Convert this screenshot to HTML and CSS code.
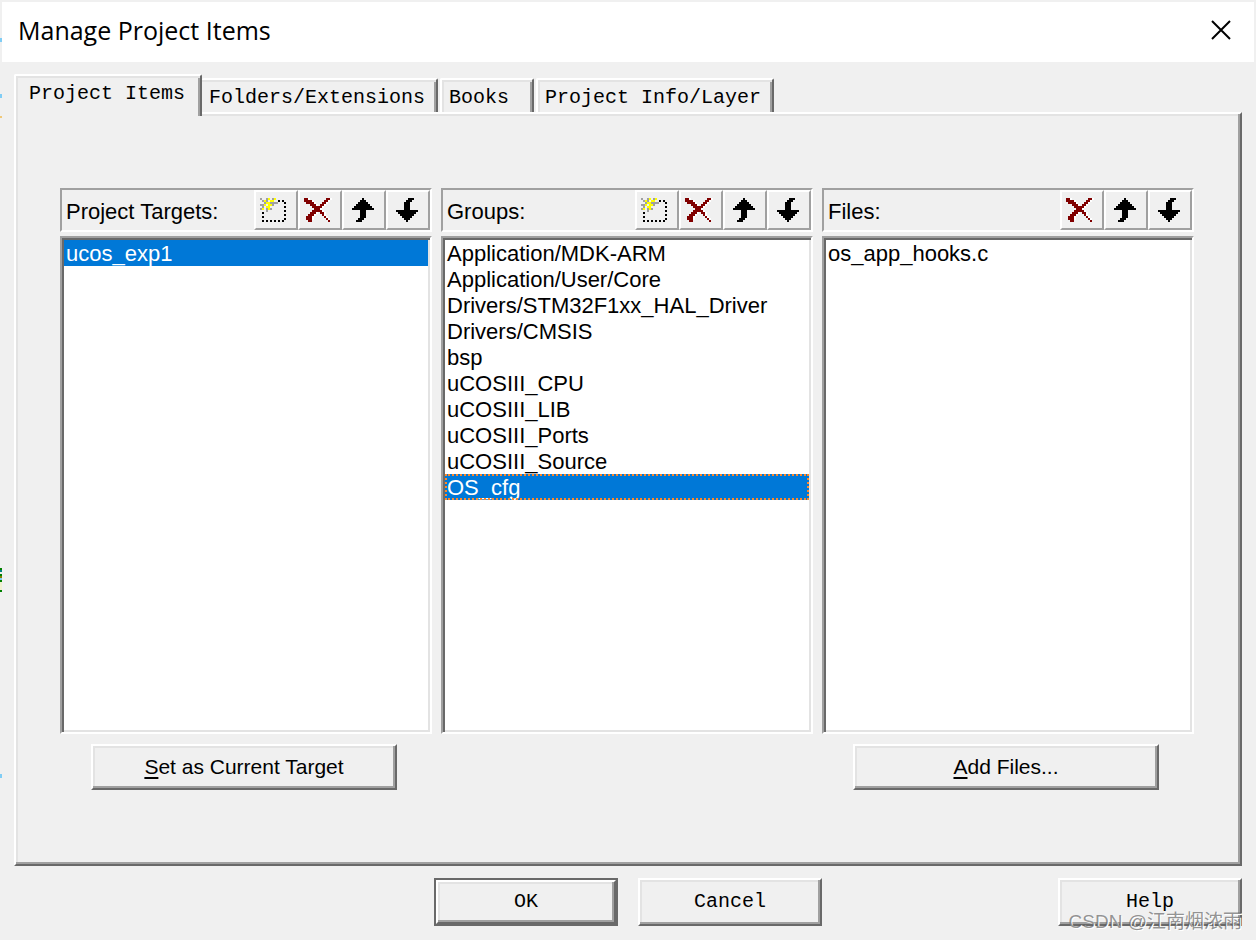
FILE: index.html
```html
<!DOCTYPE html>
<html lang="en">
<head>
<meta charset="utf-8">
<title>Manage Project Items</title>
<link rel="stylesheet" href="styles.css">
</head>
<body>
<svg class="symbols" aria-hidden="true">
  <symbol id="icon-new" viewBox="0 0 20 18">
    <path fill="#000" d="M3 14h1v1H3zM5 14h1v1H5zM7 14h1v1H7zM9 14h1v1H9zM11 14h1v1h-1zM13 14h1v1h-1zM3 12h1v1H3zM3 10h1v1H3zM14 13h1v1h-1zM14 11h1v1h-1zM14 9h1v1h-1zM14 7h1v1h-1zM14 5h1v1h-1zM13 4h1v1h-1zM11 4h1v1h-1z"/>
    <path fill="#a0a0a0" d="M2 3h1v1H2zM3 4h1v1H3zM5 3h1v2H5zM8 3h1v1H8zM4 5h1v1H4zM2 6h2v1H2zM7 5h2v1H7zM3 7h1v1H3zM2 8h1v1H2zM5 8h1v2H5zM8 6h1v1H8zM7 8h1v1H7zM9 5h2v1H9z"/>
    <path fill="#ff0" d="M6 3h1v1H6zM9 3h1v1H9zM4 4h1v1H4zM7 4h2v1H7zM5 5h2v1H5zM4 6h1v1H4zM6 6h2v1H6zM5 7h2v1H5zM3 8h1v1H3zM6 8h1v1H6z"/>
  </symbol>
  <symbol id="icon-delete" viewBox="0 0 20 18">
    <path fill="#fff" transform="translate(1 0)" d="M2 3h2v2H2zM13 3h2v1h-2zM2 4h4v1H2zM12 4h2v1h-2zM3 5h4v1H3zM11 5h2v1h-2zM5 6h3v1H5zM10 6h2v1h-2zM6 7h5v1H6zM7 8h3v1H7zM6 9h5v1H6zM5 10h3v1H5zM10 10h2v1h-2zM4 11h3v1H4zM11 11h1v1h-1zM3 12h3v1H3zM12 12h1v1h-1zM3 13h3v1H3zM13 13h1v1h-1z"/>
    <path fill="#800000" d="M2 3h2v1H2zM13 3h2v1h-2zM2 4h4v1H2zM12 4h2v1h-2zM3 5h4v1H3zM11 5h2v1h-2zM5 6h3v1H5zM10 6h2v1h-2zM6 7h5v1H6zM7 8h3v1H7zM6 9h5v1H6zM5 10h3v1H5zM10 10h2v1h-2zM4 11h3v1H4zM11 11h1v1h-1zM3 12h3v1H3zM12 12h1v1h-1zM3 13h3v1H3zM13 13h1v1h-1zM4 14h2v1H4zM14 14h1v1h-1z"/>
  </symbol>
  <symbol id="icon-up" viewBox="0 0 20 18">
    <path d="M9 3h1v1h1v1h1v1h1v1h1v1h1v1h-4v4h-1v1H9v1H6v-1h1v-1h1V9H4V8h1V7h1V6h1V5h1V4h1z"/>
  </symbol>
  <symbol id="icon-down" viewBox="0 0 20 18">
    <path d="M10 3h3v1h-1v1h-1v4h4v1h-1v1h-1v1h-1v1h-1v1h-1v1H9v-1H8v-1H7v-1H6v-1H5v-1H4V9h4V5h1V4h1z"/>
  </symbol>
</svg>

<main class="dialog">
  <header class="titlebar">
    <h1 class="title">Manage Project Items</h1>
    <button class="close" type="button" aria-label="Close">
      <svg width="20" height="20" viewBox="0 0 20 20" aria-hidden="true"><path d="M1 1 19 19M19 1 1 19" fill="none" stroke="#000" stroke-width="2"/></svg>
    </button>
  </header>

  <div class="content">
    <div class="tabs" role="tablist">
      <button class="tab tab-active" type="button" role="tab" aria-selected="true">Project Items</button>
      <button class="tab tab-joined" type="button" role="tab">Folders/Extensions</button>
      <button class="tab tab-short" type="button" role="tab">Books</button>
      <button class="tab" type="button" role="tab">Project Info/Layer</button>
    </div>

    <section class="panel" role="tabpanel">
      <div class="column">
        <div class="toolbar">
          <span class="label" id="targets-label">Project Targets:</span>
          <button class="tool" type="button" aria-label="New target"><svg class="icon"><use href="#icon-new"/></svg></button>
          <button class="tool" type="button" aria-label="Delete target"><svg class="icon"><use href="#icon-delete"/></svg></button>
          <button class="tool" type="button" aria-label="Move target up"><svg class="icon"><use href="#icon-up"/></svg></button>
          <button class="tool" type="button" aria-label="Move target down"><svg class="icon"><use href="#icon-down"/></svg></button>
        </div>
        <ul class="list" role="listbox" aria-labelledby="targets-label">
          <li class="item selected" role="option" aria-selected="true">ucos_exp1</li>
        </ul>
        <div class="action"><button class="button" type="button"><span class="key">S</span>et as Current Target</button></div>
      </div>

      <div class="column">
        <div class="toolbar">
          <span class="label" id="groups-label">Groups:</span>
          <button class="tool" type="button" aria-label="New group"><svg class="icon"><use href="#icon-new"/></svg></button>
          <button class="tool" type="button" aria-label="Delete group"><svg class="icon"><use href="#icon-delete"/></svg></button>
          <button class="tool" type="button" aria-label="Move group up"><svg class="icon"><use href="#icon-up"/></svg></button>
          <button class="tool" type="button" aria-label="Move group down"><svg class="icon"><use href="#icon-down"/></svg></button>
        </div>
        <ul class="list" role="listbox" aria-labelledby="groups-label">
          <li class="item" role="option">Application/MDK-ARM</li>
          <li class="item" role="option">Application/User/Core</li>
          <li class="item" role="option">Drivers/STM32F1xx_HAL_Driver</li>
          <li class="item" role="option">Drivers/CMSIS</li>
          <li class="item" role="option">bsp</li>
          <li class="item" role="option">uCOSIII_CPU</li>
          <li class="item" role="option">uCOSIII_LIB</li>
          <li class="item" role="option">uCOSIII_Ports</li>
          <li class="item" role="option">uCOSIII_Source</li>
          <li class="item selected focused" role="option" aria-selected="true">OS_cfg</li>
        </ul>
        <div class="action"></div>
      </div>

      <div class="column">
        <div class="toolbar">
          <span class="label" id="files-label">Files:</span>
          <button class="tool" type="button" aria-label="Delete file"><svg class="icon"><use href="#icon-delete"/></svg></button>
          <button class="tool" type="button" aria-label="Move file up"><svg class="icon"><use href="#icon-up"/></svg></button>
          <button class="tool" type="button" aria-label="Move file down"><svg class="icon"><use href="#icon-down"/></svg></button>
        </div>
        <ul class="list" role="listbox" aria-labelledby="files-label">
          <li class="item" role="option">os_app_hooks.c</li>
        </ul>
        <div class="action"><button class="button" type="button"><span class="key">A</span>dd Files...</button></div>
      </div>
    </section>

    <footer class="footer">
      <div class="choices">
        <div class="default-frame"><button class="button button-mono" type="button">OK</button></div>
        <button class="button button-mono" type="button">Cancel</button>
      </div>
      <button class="button button-mono help" type="button">Help</button>
    </footer>
  </div>
  <div class="watermark">CSDN @江南烟浓雨</div>
</main>
</body>
</html>
```

FILE: styles.css
```css
* {
  box-sizing: border-box;
}

body {
  margin: 0;
  background: #f0f0f0;
  color: #000;
  font-family: "Liberation Sans", Arial, sans-serif;
  font-size: 22px;
}

button {
  margin: 0;
  padding: 0;
  border: 0;
  background: #f0f0f0;
  color: inherit;
  font: inherit;
}

.symbols {
  display: none;
}

.dialog {
  position: relative;
  display: flex;
  flex-direction: column;
  min-height: 100vh;
  padding: 2px;
  /* slivers of the window behind the dialog */
  background:
    linear-gradient(#80cdf5, #80cdf5) 0 38px / 2px 4px no-repeat,
    linear-gradient(#80cdf5, #80cdf5) 0 94px / 2px 4px no-repeat,
    linear-gradient(#f0c878, #f0c878) 0 116px / 2px 2px no-repeat,
    linear-gradient(#008000 2px, #008080 2px 4px, #f0f0f0 4px 6px, #008000 6px 8px, #808000 8px 10px, #80cdf5 10px 12px, #008000 12px 14px, #f0f0d0 14px 22px, #008000 22px) 0 568px / 2px 24px no-repeat,
    linear-gradient(#80cdf5, #80cdf5) 0 774px / 2px 4px no-repeat,
    #f0f0f0;
}

.titlebar {
  display: flex;
  align-items: center;
  justify-content: space-between;
  height: 60px;
  padding: 0 23px 4px 16px;
  background: #fff;
}

.title {
  margin: 0;
  font: 400 25px/34px "Open Sans", "Noto Sans", sans-serif;
}

.close {
  display: flex;
  background: none;
}

.content {
  display: flex;
  flex: 1;
  flex-direction: column;
  padding: 12px;
}

.tabs {
  display: flex;
  align-items: flex-end;
  gap: 2px;
  height: 38px;
}

.tab {
  height: 34px;
  padding: 3px 11px 0 7px;
  border: 2px solid;
  border-color: #fff #696969 transparent #fff;
  border-bottom: 0;
  border-radius: 2px 2px 0 0;
  box-shadow: inset 2px 2px #e3e3e3, inset -2px 0 #a0a0a0;
  font: 20px/30px "Liberation Mono", monospace;
  text-align: left;
  white-space: nowrap;
}

.tab-active {
  position: relative;
  z-index: 1;
  height: 42px;
  margin: 0 -2px -4px 0;
  padding: 0 15px 4px 13px;
}

.tab-joined {
  border-left: 0;
  box-shadow: inset 0 2px #e3e3e3, inset -2px 0 #a0a0a0;
}

.tab-short {
  min-width: 94px;
}

.panel {
  display: grid;
  flex: 1;
  grid-template-columns: repeat(3, 1fr);
  gap: 9px;
  padding: 74px 46px 74px 44px;
  border: 2px solid;
  border-color: #fff #696969 #696969 #fff;
  box-shadow: inset -2px -2px #a0a0a0, inset 2px 2px #e3e3e3;
}

.column {
  display: flex;
  flex-direction: column;
  min-width: 0;
}

.toolbar {
  display: flex;
  align-items: center;
  margin-bottom: 4px;
  border: 2px solid;
  border-color: #a0a0a0 #fff #fff #a0a0a0;
}

.label {
  flex: 1;
  padding: 4px 0 0 4px;
  line-height: 26px;
}

.tool {
  display: flex;
  border: 2px solid;
  border-color: #fff #a0a0a0 #a0a0a0 #fff;
}

.icon {
  width: 40px;
  height: 36px;
  shape-rendering: crispEdges;
}

.list {
  flex: 1;
  margin: 0;
  padding: 2px;
  border: 2px solid;
  border-color: #a0a0a0 #fff #fff #a0a0a0;
  background: #fff;
  box-shadow: inset 2px 2px #696969, inset -2px -2px #e3e3e3;
  list-style: none;
}

.item {
  height: 26px;
  padding: 0 2px;
  line-height: 28px;
  white-space: nowrap;
}

.selected {
  background: #0078d7;
  color: #fff;
}

.focused {
  outline: 2px dotted #ff8728;
  outline-offset: -2px;
}

.action {
  display: flex;
  justify-content: center;
  height: 56px;
  padding: 10px 4px 0 0;
}

.button {
  width: 306px;
  height: 46px;
  border: 2px solid;
  border-color: #fff #696969 #696969 #fff;
  box-shadow: inset -2px -2px #a0a0a0, inset 2px 2px #e3e3e3;
  font-size: 21px;
}

.key {
  text-decoration: underline;
  text-decoration-thickness: 2px;
  text-underline-offset: 3px;
}

.footer {
  display: grid;
  grid-template-columns: 1fr auto 1fr;
  margin-top: 12px;
}

.choices {
  display: flex;
  grid-column: 2;
  gap: 20px;
}

.button-mono {
  width: 184px;
  height: 48px;
  font: 20px/24px "Liberation Mono", monospace;
}

.default-frame {
  width: 184px;
  border: 2px solid #696969;
}

.default-frame .button {
  width: 100%;
  height: 44px;
}

.help {
  justify-self: end;
}

.watermark {
  position: absolute;
  right: 14px;
  bottom: 4px;
  color: rgba(90, 90, 90, 0.65);
  font: 19px/28px "Liberation Sans", "Noto Sans CJK SC", sans-serif;
  text-shadow: 1px 1px #fff;
  pointer-events: none;
}
```
